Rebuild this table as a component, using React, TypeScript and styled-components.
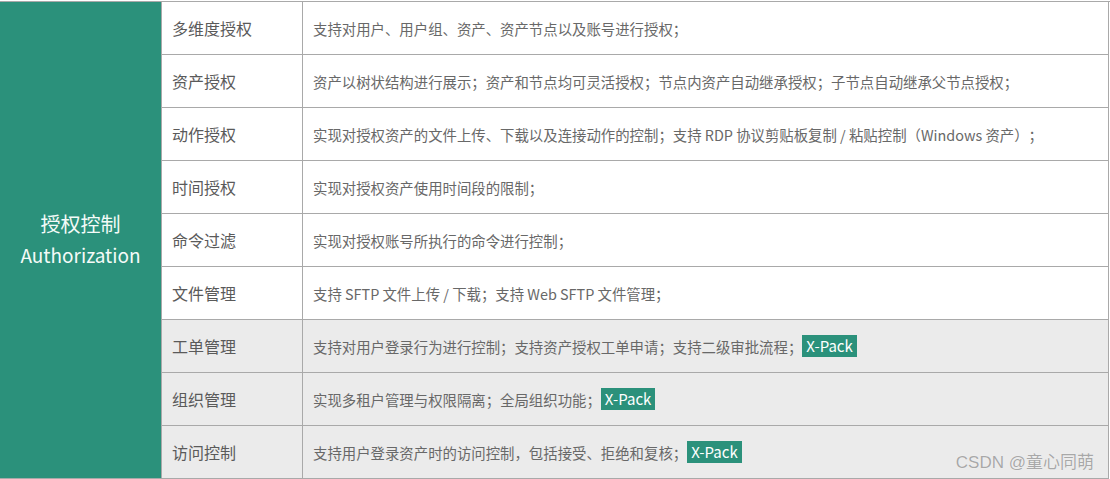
import React from 'react';
import styled, { createGlobalStyle } from 'styled-components';

const GlobalStyle = createGlobalStyle`
  html, body {
    margin: 0;
    padding: 0;
    background: #ffffff;
  }
  body {
    font-family: "Noto Sans CJK SC", "Noto Sans", sans-serif;
    text-spacing-trim: space-all;
  }
`;

const Page = styled.div`
  position: relative;
  width: 1110px;
  height: 479px;
  overflow: hidden;
  padding-top: 1px;
  box-sizing: border-box;
`;

const Table = styled.div`
  display: grid;
  grid-template-columns: 161px 141px 807px;
  grid-auto-rows: 53px;
  border-top: 1px solid #a9a9a9;
`;

const CategoryCell = styled.div`
  grid-row: span 9;
  background: #2b917b;
  border-bottom: 1px solid #a9a9a9;
  box-sizing: border-box;
  display: flex;
  flex-direction: column;
  align-items: center;
  justify-content: center;
  color: #f4fbf8;
  padding-bottom: 2px;
`;

const CategoryZh = styled.div`
  font-size: 20px;
  line-height: 31px;
`;

const CategoryEn = styled.div`
  font-size: 19px;
  line-height: 31px;
`;

const Cell = styled.div<{ $shaded: boolean; $last?: boolean }>`
  display: flex;
  align-items: center;
  box-sizing: border-box;
  padding: 0 0 0 10px;
  border-left: 1px solid #a9a9a9;
  border-bottom: 1px solid #a9a9a9;
  border-right: ${(p) => (p.$last ? '1px solid #a9a9a9' : 'none')};
  background: ${(p) => (p.$shaded ? '#ebebeb' : '#ffffff')};
  white-space: nowrap;
`;

const FeatureName = styled.span`
  font-size: 16px;
  color: #5a5a5a;
`;

const Description = styled.span`
  font-size: 14.4px;
  color: #686868;
  display: flex;
  align-items: center;
`;

const Badge = styled.span`
  display: inline-block;
  height: 22px;
  line-height: 22px;
  padding: 0 4px;
  background: #2b917b;
  color: #ffffff;
  font-size: 15px;
`;

const Watermark = styled.div`
  position: absolute;
  right: 16px;
  bottom: 6px;
  font-family: "Liberation Sans", "Noto Sans CJK SC", sans-serif;
  font-size: 17px;
  color: #a8a8a8;
  text-shadow: 0 0 1px #ffffff;
`;

interface Row {
  name: string;
  desc: string;
  xpack?: boolean;
}

const rows: Row[] = [
  { name: '多维度授权', desc: '支持对用户、用户组、资产、资产节点以及账号进行授权；' },
  {
    name: '资产授权',
    desc: '资产以树状结构进行展示；资产和节点均可灵活授权；节点内资产自动继承授权；子节点自动继承父节点授权；',
  },
  {
    name: '动作授权',
    desc: '实现对授权资产的文件上传、下载以及连接动作的控制；支持 RDP 协议剪贴板复制 / 粘贴控制（Windows 资产）；',
  },
  { name: '时间授权', desc: '实现对授权资产使用时间段的限制；' },
  { name: '命令过滤', desc: '实现对授权账号所执行的命令进行控制；' },
  { name: '文件管理', desc: '支持 SFTP 文件上传 / 下载；支持 Web SFTP 文件管理；' },
  { name: '工单管理', desc: '支持对用户登录行为进行控制；支持资产授权工单申请；支持二级审批流程；', xpack: true },
  { name: '组织管理', desc: '实现多租户管理与权限隔离；全局组织功能；', xpack: true },
  { name: '访问控制', desc: '支持用户登录资产时的访问控制，包括接受、拒绝和复核；', xpack: true },
];

export default function App() {
  return (
    <Page>
      <GlobalStyle />
      <Table>
        <CategoryCell>
          <CategoryZh>授权控制</CategoryZh>
          <CategoryEn>Authorization</CategoryEn>
        </CategoryCell>
        {rows.map((row) => (
          <React.Fragment key={row.name}>
            <Cell $shaded={!!row.xpack}>
              <FeatureName>{row.name}</FeatureName>
            </Cell>
            <Cell $shaded={!!row.xpack} $last>
              <Description>
                {row.desc}
                {row.xpack && <Badge>X-Pack</Badge>}
              </Description>
            </Cell>
          </React.Fragment>
        ))}
      </Table>
      <Watermark>CSDN @童心同萌</Watermark>
    </Page>
  );
}
